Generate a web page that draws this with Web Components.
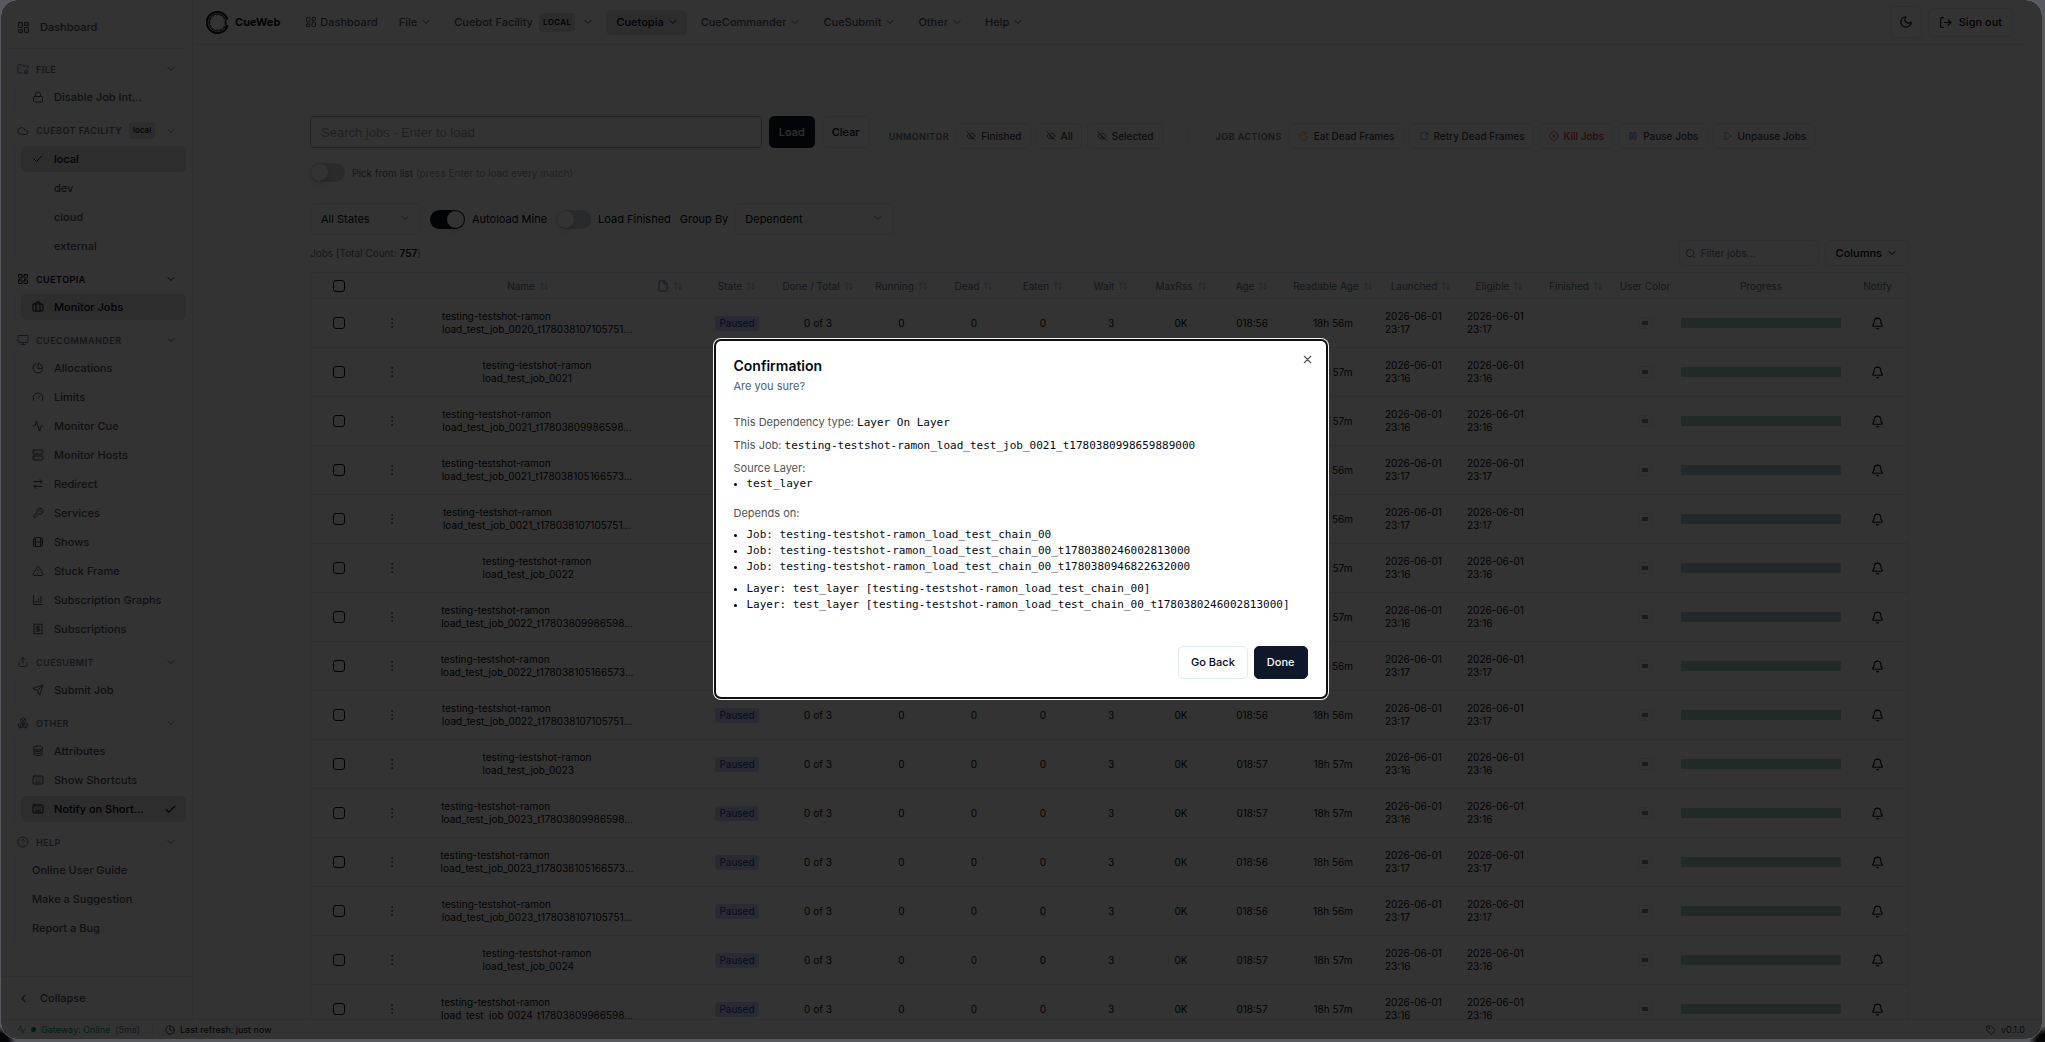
<!DOCTYPE html>
<html lang="en">
<head>
<meta charset="utf-8">
<title>CueWeb</title>
<style>
  html, body {
    height: 100%;
  }
  body {
    margin: 0;
    overflow: hidden;
    background:
      radial-gradient(circle at 0 100%, #050507 8px, transparent 16px),
      radial-gradient(circle at 100% 100%, #050507 8px, transparent 16px),
      #58585f;
    font-family: Inter, "Noto Sans", sans-serif;
    font-size: 11px;
    color: #020817;
    --muted: #64748b;
    --soft: #52525b;
    --line: #e2e8f0;
    --primary: #0f172a;
    --accent: #dfdfe2;
  }
</style>
</head>
<body>
<cue-app></cue-app>

<script>
const icons = {
  dashboard: '<rect width="7" height="9" x="3" y="3" rx="1"/><rect width="7" height="5" x="14" y="3" rx="1"/><rect width="7" height="9" x="14" y="12" rx="1"/><rect width="7" height="5" x="3" y="16" rx="1"/>',
  grid: '<rect width="7" height="7" x="3" y="3" rx="1"/><rect width="7" height="7" x="14" y="3" rx="1"/><rect width="7" height="7" x="14" y="14" rx="1"/><rect width="7" height="7" x="3" y="14" rx="1"/>',
  folderCog: '<path d="M10 20H4a2 2 0 0 1-2-2V5a2 2 0 0 1 2-2h3.9a2 2 0 0 1 1.7.9l.8 1.2a2 2 0 0 0 1.7.9H20a2 2 0 0 1 2 2v3"/><circle cx="18" cy="18" r="3"/><path d="M18 13.8V15m0 6v1.2M21.6 15.9l-1 .6m-5.2 3-1 .6m0-4.2 1 .6m5.2 3 1 .6"/>',
  lock: '<rect width="18" height="11" x="3" y="11" rx="2"/><path d="M7 11V7a5 5 0 0 1 10 0v4"/>',
  cloud: '<path d="M17.5 19H9a7 7 0 1 1 6.71-9h1.79a4.5 4.5 0 1 1 0 9Z"/>',
  check: '<path d="M20 6 9 17l-5-5"/>',
  luggage: '<path d="M16 20V4a2 2 0 0 0-2-2h-4a2 2 0 0 0-2 2v16"/><rect width="20" height="14" x="2" y="6" rx="2"/>',
  monitor: '<rect width="20" height="14" x="2" y="3" rx="2"/><path d="M8 21h8M12 17v4"/>',
  pie: '<path d="M21 12A9 9 0 0 0 12 3v9Z"/><path d="M21.2 15.9A10 10 0 1 1 8 2.8"/>',
  gauge: '<path d="m12 14 4-4"/><path d="M3.34 19a10 10 0 1 1 17.32 0"/>',
  activity: '<path d="M22 12h-2.5a2 2 0 0 0-1.9 1.5l-2.4 8.3a.25.25 0 0 1-.4 0L9.2 2.2a.25.25 0 0 0-.4 0l-2.4 8.3A2 2 0 0 1 4.5 12H2"/>',
  server: '<rect width="20" height="8" x="2" y="2" rx="2"/><rect width="20" height="8" x="2" y="14" rx="2"/><path d="M6 6h.01M6 18h.01"/>',
  swap: '<path d="m16 3 4 4-4 4M20 7H4M8 21l-4-4 4-4M4 17h16"/>',
  wrench: '<path d="M14.7 6.3a1 1 0 0 0 0 1.4l1.6 1.6a1 1 0 0 0 1.4 0l3.77-3.77a6 6 0 0 1-7.94 7.94l-6.91 6.91a2.12 2.12 0 0 1-3-3l6.91-6.91a6 6 0 0 1 7.94-7.94z"/>',
  film: '<rect width="18" height="18" x="3" y="3" rx="2"/><path d="M7 3v18M3 7.5h4M3 12h18M3 16.5h4M17 3v18M17 7.5h4M17 16.5h4"/>',
  alert: '<path d="m21.73 18-8-14a2 2 0 0 0-3.48 0l-8 14A2 2 0 0 0 4 21h16a2 2 0 0 0 1.73-3M12 9v4M12 17h.01"/>',
  chart: '<path d="M3 3v18h18M8 17v-3M13 17V9M18 17V5"/>',
  receipt: '<path d="M4 2v20l2-1 2 1 2-1 2 1 2-1 2 1 2-1 2 1V2l-2 1-2-1-2 1-2-1-2 1-2-1-2 1Z"/><path d="M16 8h-6a2 2 0 1 0 0 4h4a2 2 0 1 1 0 4H8M12 17.5v-11"/>',
  upload: '<path d="M4 13v6a2 2 0 0 0 2 2h12a2 2 0 0 0 2-2v-6M17 8l-5-5-5 5M12 3v12"/>',
  send: '<path d="M14.5 21.7a.5.5 0 0 0 .94 0l6.5-19a.5.5 0 0 0-.64-.64l-19 6.5a.5.5 0 0 0 0 .94l7.93 3.18a2 2 0 0 1 1.1 1.11zM21.85 2.15l-10.94 10.94"/>',
  boxes: '<path d="M7 12.5 2.5 15v4.5L7 22l5-2.5V15ZM17 12.5 12 15v4.5l5 2.5 4.5-2.5V15ZM12 2 7.5 4.5v5L12 12.5l4.5-3v-5ZM2.5 15 7 17.5l5-2.5M7 17.5V22M12 15l5 2.5 4.5-2.5M17 17.5V22M7.5 4.5 12 7l4.5-2.5M12 7v5.5"/>',
  layers: '<ellipse cx="12" cy="6" rx="9" ry="4"/><path d="M3 6v3c0 2.2 4 4 9 4s9-1.8 9-4V6M3 13c0 2.2 4 4 9 4s9-1.8 9-4M3 17.5c0 2.2 4 4 9 4s9-1.8 9-4"/>',
  keyboard: '<rect width="20" height="16" x="2" y="4" rx="2"/><path d="M6 8h.01M10 8h.01M14 8h.01M18 8h.01M8 12h.01M12 12h.01M16 12h.01M7 16h10"/>',
  help: '<circle cx="12" cy="12" r="10"/><path d="M9.09 9a3 3 0 0 1 5.83 1c0 2-3 3-3 3M12 17h.01"/>',
  down: '<path d="m6 9 6 6 6-6"/>',
  left: '<path d="m15 18-6-6 6-6"/>',
  moon: '<path d="M12 3a6 6 0 0 0 9 9 9 9 0 1 1-9-9Z"/>',
  logout: '<path d="M8 3H5a2 2 0 0 0-2 2v14a2 2 0 0 0 2 2h3M17 17l5-5-5-5M22 12H10"/>',
  eyeOff: '<path d="M10.7 5.1A10.7 10.7 0 0 1 21.9 12a10.7 10.7 0 0 1-1.4 2.5M14 14.2a3 3 0 0 1-4.2-4.2M17.5 17.5A10.7 10.7 0 0 1 2.1 12a10.7 10.7 0 0 1 4.4-5.1M2 2l20 20"/>',
  eat: '<path d="M20 7A9.5 9.5 0 1 0 21 15c-2 0-5-1-6-3l-4-2 5-5A9 9 0 0 0 11 3"/>',
  retry: '<path d="M21 12a9 9 0 1 1-9-9c2.5 0 4.9 1 6.7 2.7L21 8M21 3v5h-5"/>',
  kill: '<circle cx="12" cy="12" r="10"/><path d="m15 9-6 6M9 9l6 6"/>',
  pause: '<rect x="14" y="4" width="5" height="16" rx="1"/><rect x="5" y="4" width="5" height="16" rx="1"/>',
  play: '<path d="M6 3l14 9-14 9z"/>',
  search: '<circle cx="11" cy="11" r="8"/><path d="m21 21-4.3-4.3"/>',
  sort: '<path d="M7 20V4M3 8l4-4 4 4M17 4v16M21 16l-4 4-4-4"/>',
  file: '<path d="M15 2H6a2 2 0 0 0-2 2v16a2 2 0 0 0 2 2h12a2 2 0 0 0 2-2V7ZM14 2v6h6"/>',
  dots: '<circle cx="12" cy="12" r="1"/><circle cx="12" cy="4" r="1"/><circle cx="12" cy="20" r="1"/>',
  bell: '<path d="M10.3 21a2 2 0 0 0 3.4 0M3.3 15.3A1 1 0 0 0 4 17h16a1 1 0 0 0 .7-1.7C19.4 14 18 12.5 18 8A6 6 0 0 0 6 8c0 4.5-1.4 6-2.7 7.3"/>',
  clock: '<circle cx="12" cy="12" r="10"/><path d="M12 6v6l4 2"/>',
  tag: '<path d="M12.6 2.6A2 2 0 0 0 11.2 2H4a2 2 0 0 0-2 2v7.2a2 2 0 0 0 .6 1.4l8.7 8.7a2.4 2.4 0 0 0 3.4 0l6.6-6.6a2.4 2.4 0 0 0 0-3.4z"/><circle cx="7.5" cy="7.5" r="1"/>',
  close: '<path d="M18 6 6 18M6 6l12 12"/>'
};

function define(tag, render) {
  customElements.define(tag, class extends HTMLElement {
    constructor() {
      super();
      this.attachShadow({ mode: 'open' });
    }
    connectedCallback() {
      this.shadowRoot.innerHTML = render(this);
    }
  });
}

// <cue-icon name size>
define('cue-icon', el => {
  const size = el.getAttribute('size') || 12;
  return `
  <style>
    :host { display: inline-flex; flex: none; }
    svg { display: block; fill: none; stroke: currentColor; stroke-width: 2; stroke-linecap: round; stroke-linejoin: round; }
  </style>
  <svg width="${size}" height="${size}" viewBox="0 0 24 24" aria-hidden="true">${icons[el.getAttribute('name')] || ''}</svg>`;
});

/* ---------- sidebar ---------- */

define('nav-item', el => `
  <style>
    :host { display: block; }
    a {
      display: flex;
      align-items: center;
      gap: 10px;
      height: 26px;
      padding: 0 9px 0 11px;
      border-radius: 5px;
      color: var(--soft);
      font-weight: 500;
      text-decoration: none;
      white-space: nowrap;
    }
    :host([active]) a { background: var(--accent); color: #020817; }
    :host([indent]) a { padding-left: 33px; }
    span { flex: 1; }
  </style>
  <a href="#">
    ${el.hasAttribute('icon') ? `<cue-icon name="${el.getAttribute('icon')}"></cue-icon>` : ''}
    <span><slot></slot></span>
    ${el.hasAttribute('checked') ? '<cue-icon name="check" size="13"></cue-icon>' : ''}
  </a>`);

define('nav-section', el => `
  <style>
    :host { display: block; }
    button {
      display: flex;
      align-items: center;
      gap: 7px;
      width: 100%;
      min-height: 16px;
      padding: 0 9px 0 10px;
      border: 0;
      background: none;
      font: 600 9px Inter, sans-serif;
      color: var(--muted);
      text-transform: uppercase;
      letter-spacing: 0.05em;
      white-space: nowrap;
    }
    :host([active]) button { color: #020817; }
    b {
      padding: 0 4px;
      border-radius: 3px;
      background: var(--accent);
      color: #020817;
      font-size: 8px;
      line-height: 17px;
      font-weight: 500;
      letter-spacing: normal;
      text-transform: none;
    }
    .arrow { margin-left: auto; }
    .list {
      display: flex;
      flex-direction: column;
      gap: 3px;
      margin: 7px 0 0 7px;
      padding-left: 6px;
      border-left: 1px solid var(--line);
    }
  </style>
  <button type="button" aria-expanded="true">
    <cue-icon name="${el.getAttribute('icon')}"></cue-icon>
    <span>${el.getAttribute('label')}</span>
    ${el.hasAttribute('badge') ? `<b>${el.getAttribute('badge')}</b>` : ''}
    <cue-icon class="arrow" name="down"></cue-icon>
  </button>
  <div class="list"><slot></slot></div>`);

define('cue-sidebar', () => `
  <style>
    :host {
      display: flex;
      flex-direction: column;
      width: 191px;
      border-right: 1px solid var(--line);
    }
    .top {
      margin: 0 6px 12px;
      padding: 14px 0 8px;
      border-bottom: 1px solid var(--line);
    }
    .link {
      display: flex;
      align-items: center;
      gap: 10px;
      height: 26px;
      padding: 0 10px;
      color: var(--soft);
      font-weight: 500;
      text-decoration: none;
    }
    nav {
      flex: 1;
      display: flex;
      flex-direction: column;
      gap: 12px;
      padding: 0 6px;
    }
    .bottom {
      padding: 8px 6px;
      border-top: 1px solid var(--line);
    }
    button { border: 0; background: none; font: inherit; }
  </style>
  <div class="top"><a class="link" href="#"><cue-icon name="dashboard" size="13"></cue-icon>Dashboard</a></div>
  <nav aria-label="Main">
    <nav-section icon="folderCog" label="File">
      <nav-item icon="lock">Disable Job Int...</nav-item>
    </nav-section>
    <nav-section icon="cloud" label="Cuebot Facility" badge="local">
      <nav-item icon="check" active>local</nav-item>
      <nav-item indent>dev</nav-item>
      <nav-item indent>cloud</nav-item>
      <nav-item indent>external</nav-item>
    </nav-section>
    <nav-section icon="grid" label="Cuetopia" active>
      <nav-item icon="luggage" active>Monitor Jobs</nav-item>
    </nav-section>
    <nav-section icon="monitor" label="CueCommander">
      <nav-item icon="pie">Allocations</nav-item>
      <nav-item icon="gauge">Limits</nav-item>
      <nav-item icon="activity">Monitor Cue</nav-item>
      <nav-item icon="server">Monitor Hosts</nav-item>
      <nav-item icon="swap">Redirect</nav-item>
      <nav-item icon="wrench">Services</nav-item>
      <nav-item icon="film">Shows</nav-item>
      <nav-item icon="alert">Stuck Frame</nav-item>
      <nav-item icon="chart">Subscription Graphs</nav-item>
      <nav-item icon="receipt">Subscriptions</nav-item>
    </nav-section>
    <nav-section icon="upload" label="CueSubmit">
      <nav-item icon="send">Submit Job</nav-item>
    </nav-section>
    <nav-section icon="boxes" label="Other">
      <nav-item icon="layers">Attributes</nav-item>
      <nav-item icon="keyboard">Show Shortcuts</nav-item>
      <nav-item icon="keyboard" active checked>Notify on Short...</nav-item>
    </nav-section>
    <nav-section icon="help" label="Help">
      <nav-item>Online User Guide</nav-item>
      <nav-item>Make a Suggestion</nav-item>
      <nav-item>Report a Bug</nav-item>
    </nav-section>
  </nav>
  <div class="bottom"><button class="link" type="button"><cue-icon name="left" size="13"></cue-icon>Collapse</button></div>`);

/* ---------- top bar ---------- */

define('menu-button', el => `
  <style>
    :host { display: block; }
    button {
      display: flex;
      align-items: center;
      gap: 3px;
      height: 25px;
      padding: 0 8px 0 10px;
      border: 0;
      border-radius: 5px;
      background: none;
      font: 500 11px Inter, sans-serif;
      color: var(--soft);
      white-space: nowrap;
    }
    :host([active]) button { background: var(--accent); color: #020817; }
    b {
      margin: 0 4px 0 3px;
      padding: 0 4px;
      border-radius: 3px;
      background: var(--accent);
      color: #020817;
      font-size: 8px;
      font-weight: 600;
      line-height: 19px;
      letter-spacing: 0.05em;
    }
  </style>
  <button type="button" aria-haspopup="menu">
    <slot></slot>
    ${el.hasAttribute('badge') ? `<b>${el.getAttribute('badge')}</b>` : ''}
    <cue-icon name="down"></cue-icon>
  </button>`);

define('cue-topbar', () => `
  <style>
    :host {
      display: flex;
      align-items: center;
      height: 45px;
      margin-right: 15px;
      padding: 0 14px 0 13px;
      border-bottom: 1px solid var(--line);
      box-sizing: border-box;
    }
    a {
      display: flex;
      align-items: center;
      text-decoration: none;
      color: var(--soft);
      font-weight: 500;
    }
    .brand {
      gap: 6px;
      margin-right: 25px;
      color: #020817;
      font-weight: 700;
    }
    .home { gap: 3px; }
    nav {
      display: flex;
      align-items: center;
      gap: 4px;
      margin-left: 11px;
      flex: 1;
    }
    .user { display: flex; align-items: center; gap: 6px; }
    .user button {
      display: flex;
      align-items: center;
      justify-content: center;
      gap: 7px;
      height: 29px;
      padding: 0 10px;
      border: 1px solid var(--line);
      border-radius: 5px;
      background: none;
      font: 500 11px Inter, sans-serif;
      color: #020817;
    }
    .user .theme { width: 32px; height: 32px; padding: 0; }
  </style>
  <a class="brand" href="#">
    <svg width="23" height="23" viewBox="0 0 24 24" fill="none" stroke="#020817" aria-hidden="true">
      <path d="M22.5 9A11 11 0 1 0 22.5 15" stroke-width="2"/>
      <circle cx="12" cy="12" r="8" stroke-width="1" stroke-dasharray="2 2"/>
      <circle cx="12" cy="12" r="9" stroke-width="1"/>
    </svg>
    CueWeb
  </a>
  <a class="home" href="#"><cue-icon name="dashboard" size="12"></cue-icon>Dashboard</a>
  <nav aria-label="Menus">
    <menu-button>File</menu-button>
    <menu-button badge="LOCAL">Cuebot Facility</menu-button>
    <menu-button active>Cuetopia</menu-button>
    <menu-button>CueCommander</menu-button>
    <menu-button>CueSubmit</menu-button>
    <menu-button>Other</menu-button>
    <menu-button>Help</menu-button>
  </nav>
  <div class="user">
    <button class="theme" type="button" aria-label="Toggle theme"><cue-icon name="moon" size="14"></cue-icon></button>
    <button type="button"><cue-icon name="logout" size="13"></cue-icon>Sign out</button>
  </div>`);

/* ---------- controls ---------- */

define('action-button', el => `
  <style>
    :host { display: block; }
    button {
      display: flex;
      align-items: center;
      gap: 5px;
      height: 26px;
      padding: 0 8px 0 9px;
      border: 1px solid var(--line);
      border-radius: 5px;
      background: none;
      font: 500 10px Inter, sans-serif;
      color: inherit;
      white-space: nowrap;
    }
    cue-icon { color: var(--tint, currentColor); }
  </style>
  <button type="button"><cue-icon name="${el.getAttribute('icon')}" size="10"></cue-icon><slot></slot></button>`);

define('cue-switch', el => `
  <style>
    :host { display: block; }
    label { display: flex; align-items: center; gap: 7px; white-space: nowrap; }
    input {
      appearance: none;
      width: 35px;
      height: 19px;
      margin: 0;
      padding: 1px;
      border-radius: 10px;
      background: #cbd0d8;
      display: flex;
    }
    input::before {
      content: "";
      width: 17px;
      height: 17px;
      border-radius: 50%;
      background: #fff;
      box-shadow: 0 4px 6px rgba(0,0,0,0.1);
    }
    input:checked { background: var(--primary); justify-content: flex-end; }
  </style>
  <label><input type="checkbox" role="switch" ${el.hasAttribute('on') ? 'checked' : ''}><span><slot></slot></span></label>`);

define('cue-select', el => `
  <style>
    :host { display: block; position: relative; }
    select {
      appearance: none;
      width: 100%;
      height: 32px;
      padding: 0 10px;
      border: 1px solid var(--line);
      border-radius: 5px;
      background: none;
      font: 400 11px Inter, sans-serif;
      color: #020817;
    }
    cue-icon {
      position: absolute;
      right: 10px;
      top: 9px;
      color: var(--muted);
      pointer-events: none;
    }
  </style>
  <select aria-label="${el.getAttribute('label')}"><option>${el.getAttribute('value')}</option></select>
  <cue-icon name="down"></cue-icon>`);

define('job-toolbar', () => `
  <style>
    :host { display: block; }
    .row { display: flex; align-items: flex-start; gap: 19px; }
    .find { width: 35%; display: flex; flex-direction: column; gap: 15px; }
    form { display: flex; gap: 7px; }
    .query {
      flex: 1;
      min-width: 0;
      height: 32px;
      box-sizing: border-box;
      padding: 0 10px;
      border: 1px solid #a1a1aa;
      border-radius: 3px;
      background: none;
      font: 13px "Liberation Sans", sans-serif;
    }
    ::placeholder { color: #94a3b8; opacity: 1; }
    .query::placeholder { color: #a1a1aa; }
    button {
      height: 32px;
      padding: 0 9px;
      border: 1px solid var(--line);
      border-radius: 5px;
      background: none;
      font: 500 11px Inter, sans-serif;
      color: #020817;
    }
    .load { background: var(--primary); border-color: var(--primary); color: #f8fafc; }
    .pick { font-size: 10px; color: var(--muted); }
    .pick i { font-style: normal; color: #94a3b8; }
    .actions {
      display: flex;
      align-items: center;
      gap: 5px;
      margin-top: 7px;
      color: #3f3f46;
    }
    h2 {
      margin: 0 2px 0 0;
      font-size: 9px;
      font-weight: 600;
      letter-spacing: 0.05em;
      color: var(--muted);
      white-space: nowrap;
    }
    hr {
      width: 1px;
      height: 20px;
      margin: 0 22px 0 20px;
      border: 0;
      background: var(--line);
    }
    .filters {
      display: flex;
      align-items: center;
      gap: 9px;
      margin-top: 21px;
    }
    .filters label { display: flex; align-items: center; gap: 6px; white-space: nowrap; }
    .summary {
      display: flex;
      align-items: center;
      gap: 6px;
      margin: 5px 0 6px;
      font-size: 10px;
      color: var(--muted);
    }
    .summary p { flex: 1; margin: 0; }
    .summary strong { color: #020817; font-weight: 600; }
    .filter {
      display: flex;
      align-items: center;
      gap: 5px;
      width: 140px;
      height: 26px;
      padding: 0 5px;
      box-sizing: border-box;
      border: 1px solid var(--line);
      border-radius: 5px;
    }
    .filter input { width: 100%; min-width: 0; border: 0; padding: 0; background: none; font: 10px Inter, sans-serif; }
    .filter input::placeholder { color: var(--muted); }
    .columns { display: flex; align-items: center; gap: 4px; height: 26px; padding: 0 10px; }
  </style>
  <div class="row">
    <div class="find">
      <form>
        <input class="query" type="text" aria-label="Search jobs" placeholder="Search jobs - Enter to load">
        <button class="load" type="button">Load</button>
        <button type="button">Clear</button>
      </form>
      <cue-switch class="pick">Pick from list <i>(press Enter to load every match)</i></cue-switch>
    </div>
    <div class="actions">
      <h2>UNMONITOR</h2>
      <action-button icon="eyeOff">Finished</action-button>
      <action-button icon="eyeOff">All</action-button>
      <action-button icon="eyeOff">Selected</action-button>
      <hr>
      <h2>JOB ACTIONS</h2>
      <action-button icon="eat" style="--tint: #f59e0b">Eat Dead Frames</action-button>
      <action-button icon="retry" style="--tint: #3b82f6">Retry Dead Frames</action-button>
      <action-button icon="kill" style="color: #ef2b2b">Kill Jobs</action-button>
      <action-button icon="pause" style="--tint: #3b82f6">Pause Jobs</action-button>
      <action-button icon="play" style="--tint: #10b981">Unpause Jobs</action-button>
    </div>
  </div>
  <div class="filters">
    <cue-select label="State" value="All States" style="width: 111px"></cue-select>
    <cue-switch on>Autoload Mine</cue-switch>
    <cue-switch>Load Finished</cue-switch>
    <label>Group By <cue-select label="Group By" value="Dependent" style="width: 160px"></cue-select></label>
  </div>
  <div class="summary">
    <p>Jobs [Total Count: <strong>757</strong>]</p>
    <label class="filter"><cue-icon name="search" size="11"></cue-icon><input type="text" aria-label="Filter jobs" placeholder="Filter jobs..."></label>
    <button class="columns" type="button">Columns <cue-icon name="down"></cue-icon></button>
  </div>`);

/* ---------- table ---------- */

const suffixes = ['', '_t17803809986598...', '_t178038105166573...', '_t178038107105751...'];
const jobs = [['0020', 3]];
['0021', '0022', '0023', '0024'].forEach(n => suffixes.forEach((s, i) => jobs.push([n, i])));
jobs.length = 15;

const columns = [
  ['Name', 0, true], ['', 62, true], ['State', 72, true], ['Done / Total', 90, true], ['Running', 77, true],
  ['Dead', 68, true], ['Eaten', 70, true], ['Wait', 66, true], ['MaxRss', 74, true], ['Age', 68, true],
  ['Readable Age', 94, true], ['Launched', 82, true], ['Eligible', 75, true], ['Finished', 78, true],
  ['User Color', 60], ['Progress', 172], ['Notify', 61]
];

function jobRow([num, kind]) {
  const late = kind > 1;
  const min = late ? 56 : 57;
  const date = `2026-06-01<br>23:${late ? 17 : 16}`;
  return `
  <tr>
    <td><input type="checkbox" aria-label="Select row"></td>
    <td><button type="button" aria-label="Row menu"><cue-icon name="dots" size="12"></cue-icon></button></td>
    <td class="name"><span>testing-testshot-ramon<br>load_test_job_${num}${suffixes[kind]}</span></td>
    <td></td>
    <td><span class="state">Paused</span></td>
    <td>0 of 3</td><td>0</td><td>0</td><td>0</td><td>3</td><td>0K</td>
    <td>018:${min}</td><td>18h ${min}m</td>
    <td class="date">${date}</td><td class="date">${date}</td>
    <td></td>
    <td><span class="swatch"></span></td>
    <td><div class="bar"></div></td>
    <td><button type="button" aria-label="Notify"><cue-icon name="bell" size="13"></cue-icon></button></td>
  </tr>`;
}

define('job-table', () => `
  <style>
    :host {
      display: block;
      border: 1px solid var(--line);
      border-radius: 5px;
    }
    table { width: 100%; table-layout: fixed; border-collapse: collapse; font-size: 10px; }
    th { height: 25px; padding: 0; font-weight: 400; color: var(--muted); white-space: nowrap; }
    th div { display: flex; align-items: center; justify-content: center; gap: 4px; }
    th .sort { opacity: 0.6; }
    td {
      height: 48px;
      padding: 0;
      border-top: 1px solid var(--line);
      text-align: center;
      line-height: 13px;
      color: #09090b;
    }
    .name { padding-left: 18px; white-space: nowrap; }
    .name span { display: inline-block; text-align: left; }
    .date { text-align: left; padding-left: 5px; }
    td input, th input {
      appearance: none;
      display: block;
      width: 12px;
      height: 12px;
      margin: 0 auto;
      box-sizing: border-box;
      border: 1px solid #020817;
      border-radius: 3px;
    }
    button { display: flex; margin: 0 auto; padding: 0; border: 0; background: none; color: inherit; }
    td:nth-child(2) button { color: var(--soft); }
    .state { display: inline-block; padding: 0 4px; border-radius: 3px; line-height: 15px; background: #c8d8f8; color: #1e3aaf; }
    .swatch { display: block; width: 6px; height: 4px; margin: 0 auto; padding: 3px; background: #85858c content-box; border: 1px solid var(--line); border-radius: 2px; }
    .bar { height: 10px; margin: 0 6px; background: #a5cdd6; }
  </style>
  <table>
    <colgroup>
      <col style="width: 56px"><col style="width: 50px">
      ${columns.map(c => `<col${c[1] ? ` style="width: ${c[1]}px"` : ''}>`).join('')}
    </colgroup>
    <thead>
      <tr>
        <th><input type="checkbox" aria-label="Select all"></th>
        <th></th>
        ${columns.map(([label, , sortable]) => `<th><div>${label || '<cue-icon name="file"></cue-icon>'}${sortable ? '<cue-icon class="sort" name="sort" size="10"></cue-icon>' : ''}</div></th>`).join('')}
      </tr>
    </thead>
    <tbody>${jobs.map(jobRow).join('')}</tbody>
  </table>`);

/* ---------- status bar ---------- */

define('status-bar', () => `
  <style>
    :host {
      display: flex;
      align-items: center;
      gap: 5px;
      height: 19px;
      padding: 0 17px 0 16px;
      border-top: 1px solid var(--line);
      font-size: 9px;
    }
    .online { color: #059669; }
    .dot { width: 5px; height: 5px; border-radius: 50%; background: #059669; }
    .ping { color: var(--muted); }
    .refresh { display: flex; align-items: center; gap: 5px; margin-left: 7px; padding-left: 12px; border-left: 1px solid var(--line); }
    .version { display: flex; align-items: center; gap: 5px; margin-left: auto; color: #3f3f46; }
  </style>
  <cue-icon class="online" name="activity" size="9"></cue-icon>
  <span class="dot"></span>
  <span class="online">Gateway: Online</span>
  <span class="ping">(5ms)</span>
  <span class="refresh"><cue-icon name="clock" size="10"></cue-icon>Last refresh: just now</span>
  <span class="version"><cue-icon name="tag" size="10"></cue-icon>v0.1.0</span>`);

/* ---------- dialog ---------- */

define('confirm-dialog', () => `
  <style>
    :host {
      position: absolute;
      inset: 0;
      z-index: 10;
      display: flex;
      align-items: center;
      justify-content: center;
      padding: 0 2px 2px 0;
      background: rgba(0,0,0,0.8);
    }
    dialog {
      position: relative;
      width: 610px;
      margin: 0;
      padding: 18px;
      box-sizing: border-box;
      border: 0;
      border-radius: 5px;
      background: #fff;
      box-shadow: 0 0 0 2px #101010, 0 0 0 3px #f4f4f4;
      color: #020817;
    }
    .close {
      position: absolute;
      top: 12px;
      right: 12px;
      display: flex;
      padding: 0;
      border: 0;
      background: none;
      color: #52525b;
    }
    footer { display: flex; justify-content: flex-end; gap: 6px; margin-top: 33px; }
    footer button {
      height: 33px;
      padding: 0 12px;
      border: 1px solid var(--line);
      border-radius: 5px;
      background: #fff;
      font: 500 11px Inter, sans-serif;
      color: #020817;
    }
    footer .done { background: var(--primary); border-color: var(--primary); color: #f8fafc; }
  </style>
  <dialog open aria-modal="true">
    <slot name="title"></slot>
    <slot></slot>
    <footer>
      <button type="button">Go Back</button>
      <button class="done" type="button">Done</button>
    </footer>
    <button class="close" type="button" aria-label="Close"><cue-icon name="close" size="13"></cue-icon></button>
  </dialog>`);

define('dependency-summary', () => `
  <style>
    :host { display: block; line-height: 16px; color: #52525b; }
    p { margin: 0 0 7px; }
    code, ul { font-family: "DejaVu Sans Mono", monospace; font-size: 11px; color: #020817; }
    code { line-height: 12px; }
    ul { margin: 0 0 6px; padding-left: 13px; }
    .source { margin: 0; }
    .source + ul { margin-bottom: 13px; }
    .depends { margin-bottom: 6px; }
    ul:last-child { margin: 0; }
  </style>
  <p>This Dependency type: <code>Layer On Layer</code></p>
  <p>This Job: <code>testing-testshot-ramon_load_test_job_0021_t1780380998659889000</code></p>
  <p class="source">Source Layer:</p>
  <ul><li>test_layer</li></ul>
  <p class="depends">Depends on:</p>
  <ul>
    <li>Job: testing-testshot-ramon_load_test_chain_00</li>
    <li>Job: testing-testshot-ramon_load_test_chain_00_t1780380246002813000</li>
    <li>Job: testing-testshot-ramon_load_test_chain_00_t1780380946822632000</li>
  </ul>
  <ul>
    <li>Layer: test_layer [testing-testshot-ramon_load_test_chain_00]</li>
    <li>Layer: test_layer [testing-testshot-ramon_load_test_chain_00_t1780380246002813000]</li>
  </ul>`);

/* ---------- app ---------- */

define('cue-app', () => `
  <style>
    :host { display: block; height: 100vh; padding: 0 3px 3px 1px; box-sizing: border-box; }
    .window {
      position: relative;
      display: flex;
      flex-direction: column;
      height: 100%;
      border-radius: 16px;
      overflow: hidden;
      background: #fff;
    }
    .body { display: flex; flex: 1; min-height: 0; }
    main { flex: 1; min-width: 0; overflow: hidden; }
    .page { margin-right: 15px; padding: 71px 118px 0 117px; }
    h1 { margin: 0; font-size: 14px; line-height: 14px; font-weight: 600; }
    .lead { margin: 5px 0 20px; line-height: 16px; color: #4b5d7c; }
  </style>
  <div class="window">
    <div class="body">
      <cue-sidebar></cue-sidebar>
      <main>
        <cue-topbar></cue-topbar>
        <div class="page">
          <job-toolbar></job-toolbar>
          <job-table></job-table>
        </div>
      </main>
    </div>
    <status-bar></status-bar>
    <confirm-dialog>
      <h1 slot="title">Confirmation</h1>
      <p class="lead">Are you sure?</p>
      <dependency-summary></dependency-summary>
    </confirm-dialog>
  </div>`);
</script>
</body>
</html>
